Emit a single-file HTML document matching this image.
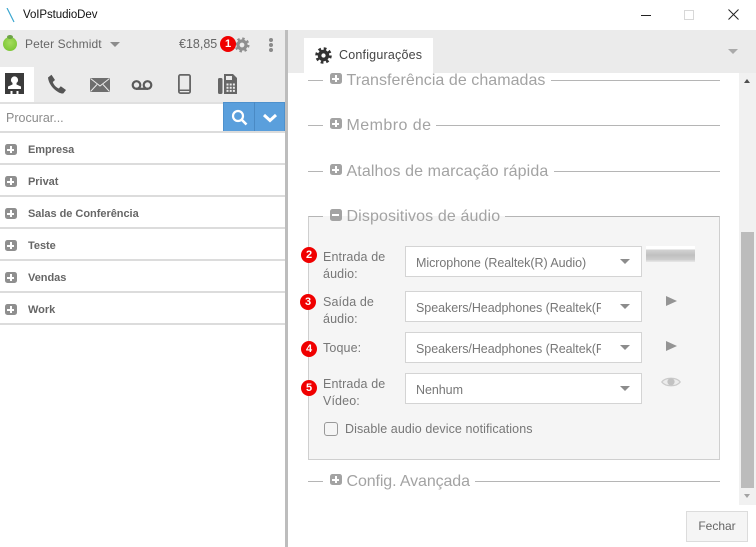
<!DOCTYPE html>
<html><head><meta charset="utf-8">
<style>
*{box-sizing:border-box}
html,body{margin:0;padding:0;background:#fff}
body{width:756px;height:547px;position:relative;overflow:hidden;font-family:"Liberation Sans",sans-serif;color:#666}
.a{position:absolute}
.t{position:absolute;white-space:nowrap;line-height:1}
.row{position:absolute;left:0;width:285px;height:2px;background:#dcdcdc}
.rt{position:absolute;left:28px;font-size:11px;font-weight:bold;color:#666;white-space:nowrap;line-height:14px;letter-spacing:-.03px}
.pm{position:absolute;left:4.5px;width:12px;height:11px;background:#8f8f8f;border-radius:2.5px}
.pm:before{content:"";position:absolute;left:2.5px;top:4.5px;width:7px;height:2px;background:#fff}
.pm:after{content:"";position:absolute;left:5px;top:2px;width:2px;height:7px;background:#fff}
.pr{left:329.5px;background:#a3a3a3}
.ln{position:absolute;height:1px;background:#b5b5b5}
.lg{position:absolute;left:346.5px;font-size:16px;color:#a3a3a3;white-space:nowrap;line-height:20px}
.lab{position:absolute;left:323px;font-size:12.5px;line-height:17px;color:#777;letter-spacing:.12px}
.sel{position:absolute;left:405px;width:237px;height:31px;background:#fff;border:1px solid #d4d4d4;font-size:12.5px;color:#777;line-height:32px;padding-left:10px;white-space:nowrap;overflow:hidden;letter-spacing:-.05px}
.sel span{display:block;width:185px;overflow:hidden}
.sel:after{content:"";position:absolute;right:11px;top:12px;border-left:5px solid transparent;border-right:5px solid transparent;border-top:5px solid #8c8c8c}
.n{position:absolute;width:16px;height:16px;border-radius:50%;background:#f00000;color:#fff;font-size:11px;font-weight:bold;line-height:16px;text-align:center}
.play{position:absolute;left:666px;width:0;height:0;border-left:11px solid #949494;border-top:5.5px solid transparent;border-bottom:5.5px solid transparent}
</style></head>
<body>
<!-- title bar -->
<svg class="a" style="left:6px;top:8px" width="12" height="16"><path d="M1 0L8 14" stroke="#3aa6cf" stroke-width="1.2" fill="none"/></svg>
<div class="t" style="left:23px;top:10px;font-size:11.5px;color:#111;letter-spacing:-.08px">VoIPstudioDev</div>
<div class="a" style="left:641px;top:15px;width:10px;height:1px;background:#222"></div>
<div class="a" style="left:684px;top:10px;width:10px;height:10px;border:1px solid #d8d8d8"></div>
<svg class="a" style="left:728px;top:9px" width="11" height="11"><path d="M.5 .5L10.500 10.500M10.500 .5L.5 10.500" stroke="#222" stroke-width="1" fill="none"/></svg>

<!-- left panel -->
<div class="a" style="left:0;top:30px;width:285px;height:72px;background:#ebebeb"></div>
<div class="a" style="left:285px;top:30px;width:3px;height:517px;background:#bdbdbd"></div>
<div class="a" style="left:3px;top:37px;width:14px;height:14px;border-radius:50%;background:radial-gradient(circle at 50% 40%,#a4dc5c,#71c02a)"></div>
<div class="a" style="left:7px;top:35px;width:6px;height:4px;border-radius:50%;background:#6ea348"></div>
<div class="t" style="left:25px;top:38px;font-size:12px;color:#666;letter-spacing:.1px">Peter Schmidt</div>
<div class="a" style="left:110px;top:42px;border-left:5px solid transparent;border-right:5px solid transparent;border-top:5px solid #8c8c8c"></div>
<div class="t" style="left:179px;top:38px;font-size:12.5px;color:#666">€18,85</div>
<svg class="a" style="left:234px;top:37px" width="16" height="16" viewBox="0 0 16 16"><circle cx="8" cy="8" r="4" fill="none" stroke="#8f8f8f" stroke-width="3.2"/><circle cx="8" cy="8" r="6.3" fill="none" stroke="#8f8f8f" stroke-width="2.4" stroke-dasharray="2.4 2.55"/></svg>
<div class="n" style="left:220px;top:36px">1</div>
<div class="a" style="left:269px;top:38px;width:4px;height:4px;border-radius:50%;background:#8a8a8a;box-shadow:0 5px 0 #8a8a8a,0 10px 0 #8a8a8a"></div>

<!-- tab icons -->
<div class="a" style="left:0;top:67px;width:34px;height:35px;background:#fff"></div>
<svg class="a" style="left:5px;top:73px" width="19" height="21" viewBox="0 0 19 21"><rect width="19" height="21" fill="#3b3b3b"/><circle cx="9.5" cy="7" r="3.6" fill="#fff"/><path d="M7.500 9v2.500L3 13.500V16h13v-2.500L11.500 11.500V9z" fill="#fff"/><path d="M5.500 18h2v3h-2zM11.500 18h2v3h-2z" fill="#fff"/></svg>
<svg class="a" style="left:47px;top:74px" width="20" height="20" viewBox="0 0 20 20"><path d="M1 3.500L4.500 .8 8 6 5.800 8C6.500 10.500 9 13.500 11.800 14.500L13.800 12.300 19 16l-2.500 3.200C15 20 12 19 8.500 16.200 4.500 13 1.500 8.500 1 3.500z" fill="#555"/></svg>
<svg class="a" style="left:90px;top:78px" width="20" height="14" viewBox="0 0 20 14"><rect width="20" height="14" fill="#6e6e6e"/><path d="M.5 .5L10 8 19.500 .5M.5 13.500L7 6.500M19.500 13.500L13 6.500" stroke="#ebebeb" stroke-width="1" fill="none"/></svg>
<svg class="a" style="left:131px;top:79px" width="22" height="12" viewBox="0 0 22 12"><circle cx="5.500" cy="6" r="3.800" fill="none" stroke="#5a5a5a" stroke-width="2.200"/><circle cx="16.500" cy="6" r="3.800" fill="none" stroke="#5a5a5a" stroke-width="2.200"/><rect x="5" y="8.700" width="12" height="2.200" fill="#5a5a5a"/></svg>
<svg class="a" style="left:178px;top:74px" width="13" height="20" viewBox="0 0 13 20"><rect x=".9" y=".9" width="11.200" height="18.200" rx="1.500" fill="none" stroke="#666" stroke-width="1.800"/><rect x="1" y="15.500" width="11" height="1.500" fill="#666"/></svg>
<svg class="a" style="left:218px;top:74px" width="20" height="20" viewBox="0 0 20 20"><rect x="0" y="4" width="4.500" height="16" rx="1.500" fill="#666"/><path d="M6 0h9l4 4v16H6z" fill="#666"/><rect x="8" y="2" width="6" height="4" fill="#ebebeb"/><path d="M8.500 9.500h2v2h-2zM11.700 9.500h2v2h-2zM14.900 9.500h2v2h-2zM8.500 12.700h2v2h-2zM11.700 12.700h2v2h-2zM14.900 12.700h2v2h-2zM8.500 15.900h2v2h-2zM11.700 15.900h2v2h-2zM14.900 15.900h2v2h-2z" fill="#ebebeb"/></svg>

<!-- search -->
<div class="a" style="left:0;top:102px;width:285px;height:2px;background:#e0e0e0"></div>
<div class="t" style="left:6px;top:112px;font-size:12.5px;color:#8c8c8c">Procurar...</div>
<div class="a" style="left:223px;top:102px;width:62px;height:31px;background:#5a9fdc;border:1px solid #4e91cd"></div>
<div class="a" style="left:254px;top:102px;width:1px;height:31px;background:#4a8ac4"></div>
<svg class="a" style="left:231px;top:109px" width="17" height="17" viewBox="0 0 17 17"><circle cx="7" cy="7" r="5" fill="none" stroke="#fff" stroke-width="2.200"/><path d="M10.500 10.500L15.500 15.500" stroke="#fff" stroke-width="2.600"/></svg>
<svg class="a" style="left:262px;top:113px" width="16" height="10" viewBox="0 0 16 10"><path d="M2 2l6 5.500L14 2" fill="none" stroke="#fff" stroke-width="3"/></svg>

<!-- list -->
<div class="row" style="top:131px"></div>
<div class="pm" style="top:144px"></div><div class="rt" style="top:143px">Empresa</div>
<div class="row" style="top:163px"></div>
<div class="pm" style="top:176px"></div><div class="rt" style="top:175px">Privat</div>
<div class="row" style="top:195px"></div>
<div class="pm" style="top:208px"></div><div class="rt" style="top:207px">Salas de Conferência</div>
<div class="row" style="top:227px"></div>
<div class="pm" style="top:240px"></div><div class="rt" style="top:239px">Teste</div>
<div class="row" style="top:259px"></div>
<div class="pm" style="top:272px"></div><div class="rt" style="top:271px">Vendas</div>
<div class="row" style="top:291px"></div>
<div class="pm" style="top:304px"></div><div class="rt" style="top:303px">Work</div>
<div class="row" style="top:323px"></div>

<!-- right header -->
<div class="a" style="left:288px;top:30px;width:468px;height:43px;background:#ebebeb"></div>
<div class="a" style="left:304px;top:38px;width:129px;height:35px;background:#fff"></div>
<svg class="a" style="left:315px;top:47px" width="17" height="17" viewBox="0 0 16 16"><circle cx="8" cy="8" r="3.700" fill="none" stroke="#333" stroke-width="3.400"/><circle cx="8" cy="8" r="6.400" fill="none" stroke="#333" stroke-width="2.800" stroke-dasharray="2.500 2.530"/></svg>
<div class="t" style="left:339px;top:49px;font-size:12.5px;color:#444;letter-spacing:.2px">Configurações</div>
<div class="a" style="left:728px;top:49px;border-left:5px solid transparent;border-right:5px solid transparent;border-top:5px solid #aaa"></div>

<!-- scrollbar -->
<div class="a" style="left:739px;top:73px;width:17px;height:432px;background:#f1f1f1"></div>
<div class="a" style="left:741px;top:232px;width:13px;height:256px;background:#bcbcbc"></div>
<div class="a" style="left:744px;top:79px;border-left:3.500px solid transparent;border-right:3.500px solid transparent;border-bottom:4px solid #505050"></div>
<div class="a" style="left:744px;top:494px;border-left:3.500px solid transparent;border-right:3.500px solid transparent;border-top:4px solid #a3a3a3"></div>

<!-- sections -->
<div class="ln" style="left:308px;top:80px;width:15px"></div>
<div class="pm pr" style="top:73px"></div>
<div class="lg" style="top:71px;letter-spacing:.05px">Transferência de chamadas</div>
<div class="ln" style="left:551px;top:80px;width:169px"></div>

<div class="ln" style="left:308px;top:125px;width:15px"></div>
<div class="pm pr" style="top:118px"></div>
<div class="lg" style="top:116px;letter-spacing:.45px">Membro de</div>
<div class="ln" style="left:436px;top:125px;width:284px"></div>

<div class="ln" style="left:308px;top:171px;width:15px"></div>
<div class="pm pr" style="top:164px"></div>
<div class="lg" style="top:162px;letter-spacing:.1px">Atalhos de marcação rápida</div>
<div class="ln" style="left:554px;top:171px;width:166px"></div>

<!-- audio fieldset -->
<div class="a" style="left:308px;top:216px;width:412px;height:244px;background:#f5f5f5;border:1px solid #cfcfcf;border-top:1px solid #b5b5b5"></div>
<div class="a" style="left:323px;top:205px;width:182px;height:11px;background:#fff"></div>
<div class="a" style="left:323px;top:216px;width:182px;height:1px;background:#f5f5f5"></div>
<div class="a" style="left:329.500px;top:208.500px;width:12px;height:12px;background:#a3a3a3;border-radius:2.500px"></div>
<div class="a" style="left:332px;top:213.500px;width:7px;height:2px;background:#fff"></div>
<div class="lg" style="top:207px;letter-spacing:.12px">Dispositivos de áudio</div>

<div class="n" style="left:301px;top:247px">2</div>
<div class="lab" style="top:249px">Entrada de<br>áudio:</div>
<div class="sel" style="top:246px"><span>Microphone (Realtek(R) Audio)</span></div>
<div class="a" style="left:646px;top:246px;width:49px;height:16px;background:linear-gradient(#fff 0,#fff 3px,#d2d2d2 4px,#c0c0c0 9px,#cfcfcf 14px,#e3e3e3 15px)"></div>

<div class="n" style="left:300px;top:294px">3</div>
<div class="lab" style="top:294px">Saída de<br>áudio:</div>
<div class="sel" style="top:291px"><span>Speakers/Headphones (Realtek(R) Audio)</span></div>
<div class="play" style="top:296px"></div>

<div class="n" style="left:301px;top:341px">4</div>
<div class="lab" style="top:340px">Toque:</div>
<div class="sel" style="top:332px"><span>Speakers/Headphones (Realtek(R) Audio)</span></div>
<div class="play" style="top:341px"></div>

<div class="n" style="left:301px;top:380px">5</div>
<div class="lab" style="top:376px">Entrada de<br>Vídeo:</div>
<div class="sel" style="top:373px"><span>Nenhum</span></div>
<svg class="a" style="left:661px;top:376px" width="20" height="12" viewBox="0 0 20 12"><path d="M.8 6C4.500 1 15.500 1 19.200 6 15.500 11 4.500 11 .8 6z" fill="#ececec" stroke="#cacaca" stroke-width="1.200"/><circle cx="10" cy="5.800" r="3.600" fill="#c2c2c2"/></svg>

<div class="a" style="left:324px;top:422px;width:14px;height:14px;border:1.500px solid #999;border-radius:3px;background:#f5f5f5"></div>
<div class="t" style="left:345px;top:423px;font-size:12.500px;color:#777;letter-spacing:.08px">Disable audio device notifications</div>

<div class="ln" style="left:308px;top:481px;width:15px"></div>
<div class="pm pr" style="top:474px"></div>
<div class="lg" style="top:472px;letter-spacing:-.11px">Config. Avançada</div>
<div class="ln" style="left:475px;top:481px;width:245px"></div>

<div class="a" style="left:686px;top:511px;width:62px;height:31px;background:#f5f5f5;border:1px solid #dcdcdc;font-size:12px;color:#666;text-align:center;line-height:29px">Fechar</div>
</body></html>
